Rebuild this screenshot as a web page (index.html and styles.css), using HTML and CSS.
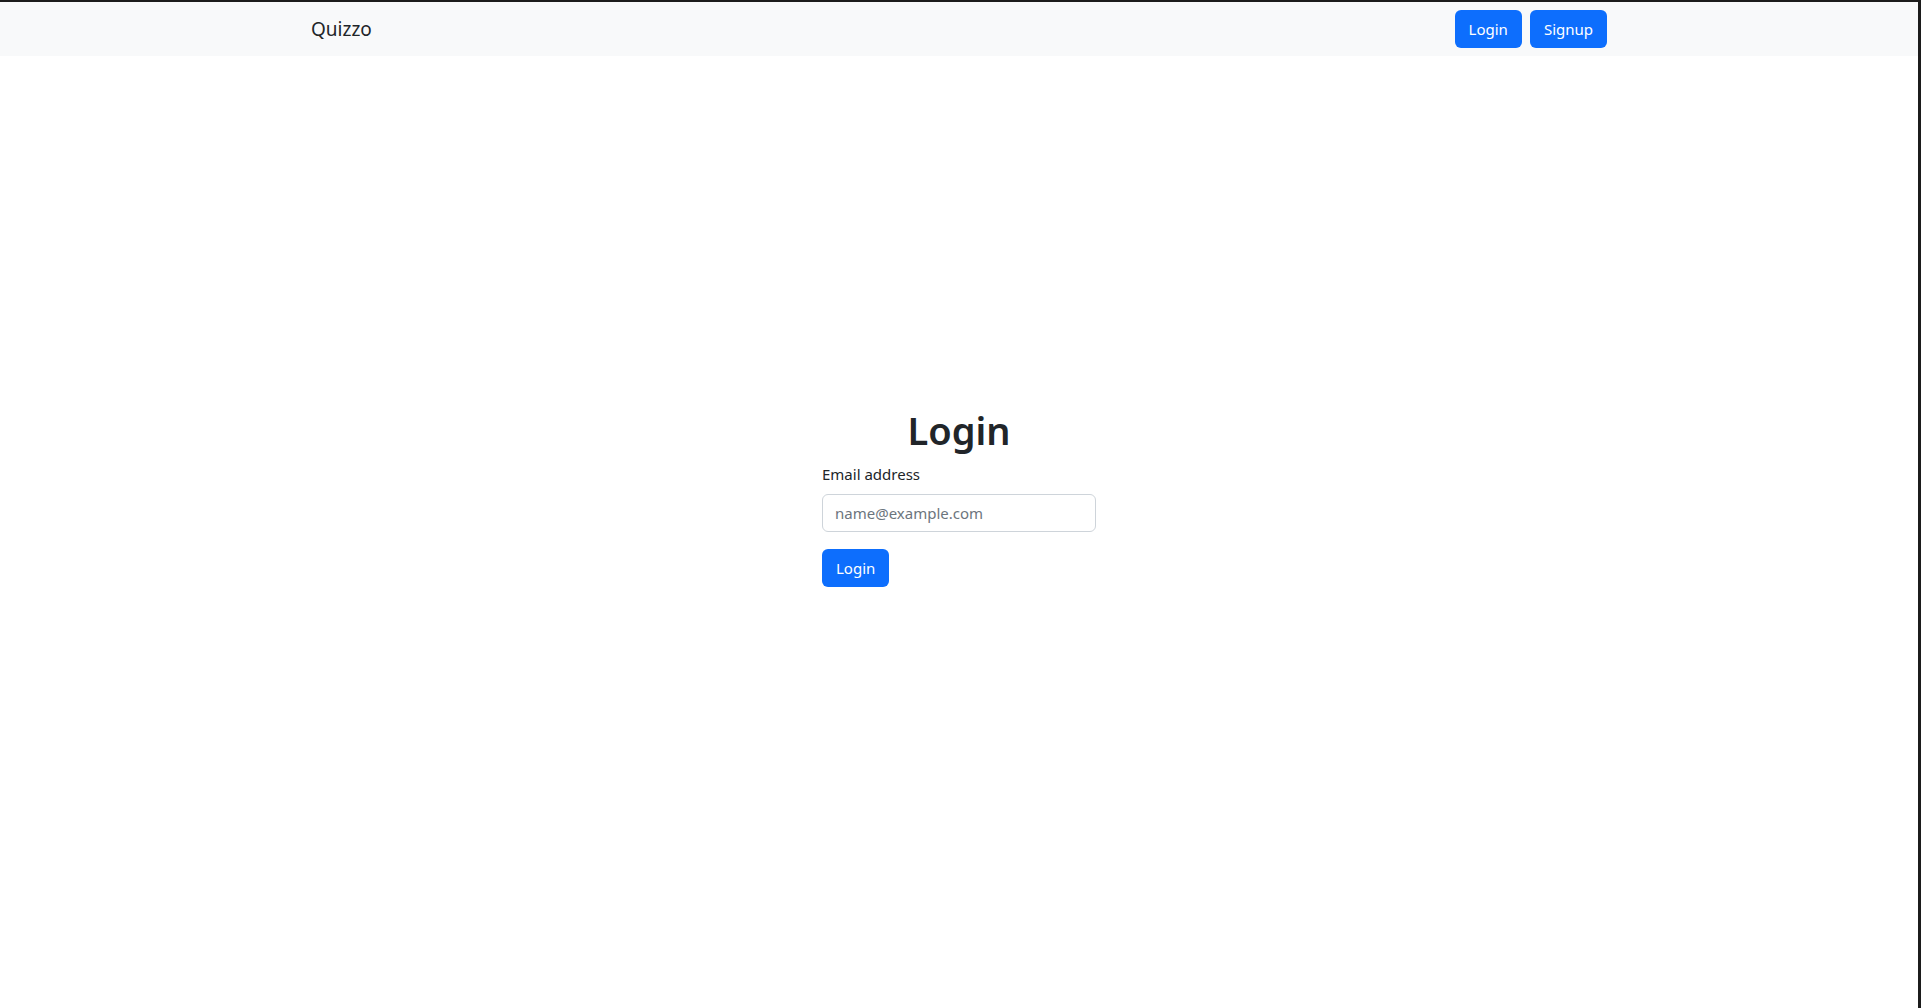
FILE: index.html
```html
<!DOCTYPE html>
<html lang="en">
<head>
  <meta charset="UTF-8" />
  <meta name="viewport" content="width=device-width, initial-scale=1.0"/>
  <title>Quizzo - Login</title>
  <link rel="stylesheet" href="styles.css">
</head>
<body>
  <div class="frame">
    <nav class="navbar">
      <div class="container nav-inner">
        <a class="brand" href="#">Quizzo</a>
        <div class="nav-actions">
          <button class="btn">Login</button>
          <button class="btn">Signup</button>
        </div>
      </div>
    </nav>

    <main class="main">
      <form class="login-form">
        <h1>Login</h1>
        <label class="label" for="email">Email address</label>
        <input type="email" id="email" class="input" placeholder="name@example.com">
        <button type="button" class="btn">Login</button>
      </form>
    </main>
  </div>
</body>
</html>
```

FILE: styles.css
```css
:root {
  --primary: #0d6efd;
  --text-color: #212529;
  --nav-bg: #f8f9fa;
  --border: #ced4da;
}

* {
  box-sizing: border-box;
}

body {
  margin: 0;
  font-family: 'Noto Sans', 'Open Sans', sans-serif;
  color: var(--text-color);
  background: #fff;
}

.frame {
  min-height: 1008px;
  border-top: 2px solid #1c1c1c;
  border-right: 3px solid #1c1c1c;
}

.navbar {
  background: var(--nav-bg);
  height: 54px;
  display: flex;
  align-items: center;
}

.container {
  width: 1320px;
  margin: 0 auto;
  padding: 0 12px;
}

.nav-inner {
  display: flex;
  justify-content: space-between;
  align-items: center;
}

.brand {
  font-size: 19px;
  color: var(--text-color);
  text-decoration: none;
}

.nav-actions {
  display: flex;
  gap: 8px;
}

.btn {
  font-family: inherit;
  font-size: 15px;
  height: 38px;
  padding: 0 14px;
  color: #fff;
  background: var(--primary);
  border: none;
  border-radius: 6px;
  cursor: pointer;
}

.main {
  display: flex;
  justify-content: center;
  padding-top: 350px;
}

.login-form {
  width: 274px;
  display: flex;
  flex-direction: column;
  align-items: flex-start;
}

h1 {
  align-self: center;
  font-size: 38px;
  font-weight: 600;
  line-height: 48px;
  margin: 0 0 8px;
}

.label {
  font-size: 15px;
  line-height: 24px;
  margin-bottom: 8px;
}

.input {
  width: 100%;
  height: 38px;
  padding: 0 12px;
  font-family: inherit;
  font-size: 15px;
  color: var(--text-color);
  border: 1px solid var(--border);
  border-radius: 6px;
  margin-bottom: 17px;
}

.input::placeholder {
  color: #6c757d;
}
```
